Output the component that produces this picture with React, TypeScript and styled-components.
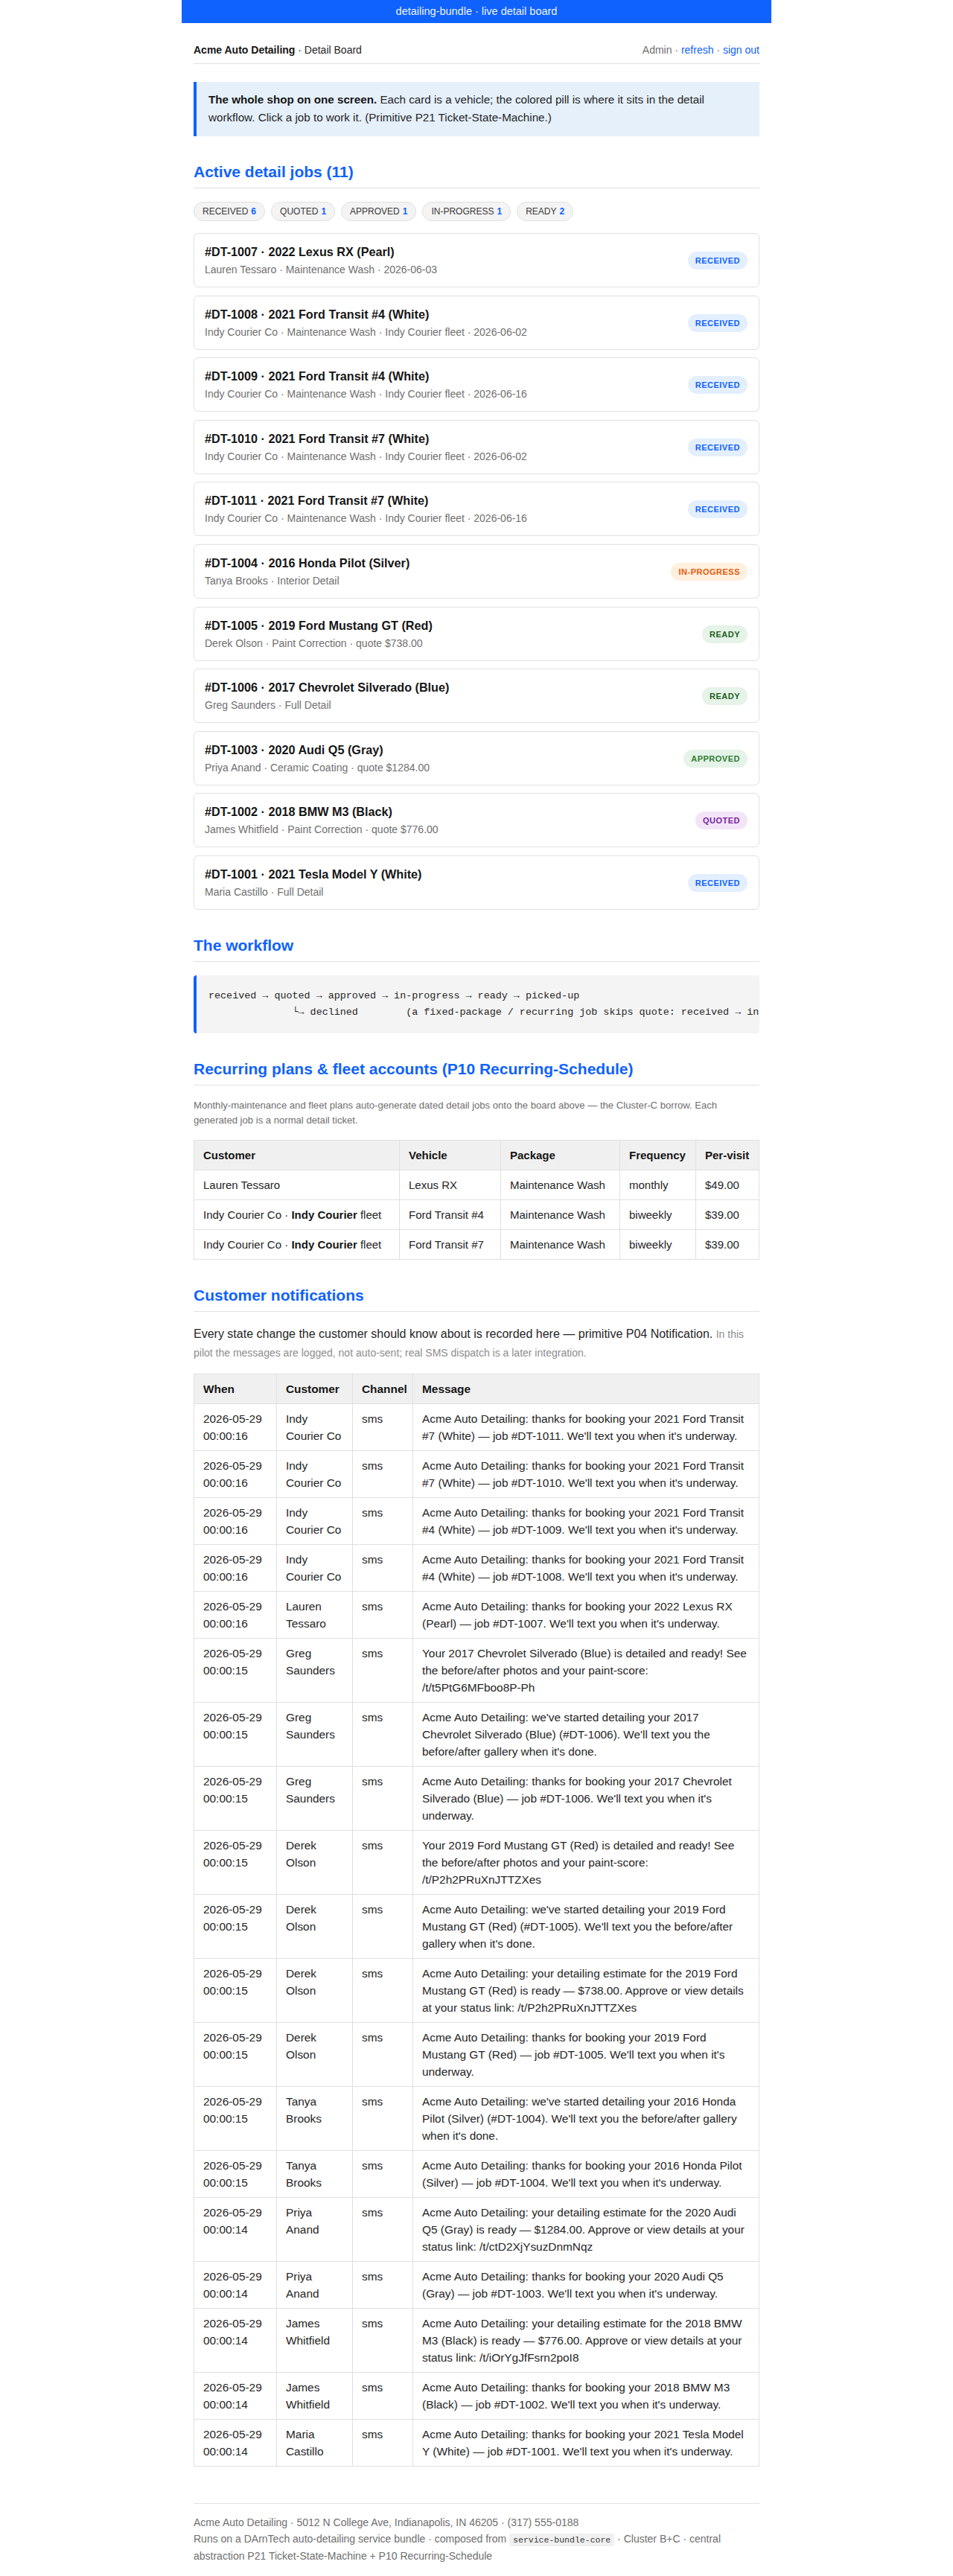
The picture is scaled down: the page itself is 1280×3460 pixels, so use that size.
import React from "react";
import styled, { createGlobalStyle, css } from "styled-components";

const GlobalStyle = createGlobalStyle`
  html, body {
    margin: 0;
    padding: 0;
    background: #ffffff;
  }
  body {
    font-family: "Liberation Sans", Arial, sans-serif;
    color: #161616;
  }
  *, *::before, *::after {
    box-sizing: border-box;
  }
`;

const BLUE = "#0f62fe";
const LINE = "#e0e0e0";
const MUTED = "#6f6f6f";

/* ---------- frame ---------- */

const Shell = styled.div`
  max-width: 792px;
  margin: 0 auto;
`;

const TopBar = styled.div`
  height: 31px;
  background: ${BLUE};
  color: rgba(255, 255, 255, 0.95);
  font-size: 14.5px;
  line-height: 31px;
  text-align: center;
`;

const Main = styled.main`
  padding: 12px 16px 0;
`;

const Header = styled.header`
  display: flex;
  align-items: center;
  justify-content: space-between;
  padding: 14px 0 8px;
  border-bottom: 1px solid ${LINE};
  font-size: 14px;
  line-height: 20px;
`;

const Brand = styled.div`
  color: #262626;
  strong {
    color: #161616;
    font-weight: 700;
  }
`;

const UserNav = styled.nav`
  color: ${MUTED};
`;

const NavLink = styled.a`
  color: ${BLUE};
  text-decoration: none;
  cursor: pointer;
`;

const Callout = styled.div`
  margin-top: 24px;
  padding: 12px 20px 13px 16px;
  background: #e5f0fb;
  border-left: 4px solid ${BLUE};
  font-size: 15.2px;
  line-height: 24px;
  color: #262626;
  strong {
    color: #161616;
  }
`;

const SectionTitle = styled.h2`
  margin: 34px 0 0;
  padding-bottom: 7px;
  border-bottom: 1px solid ${LINE};
  color: ${BLUE};
  font-size: 21px;
  line-height: 28px;
  font-weight: 700;
`;

/* ---------- state counters ---------- */

const CounterRow = styled.div`
  display: flex;
  gap: 8px;
  margin-top: 18px;
`;

const Counter = styled.span`
  display: inline-flex;
  align-items: center;
  gap: 4px;
  height: 26px;
  padding: 0 11px;
  border: 1px solid ${LINE};
  border-radius: 13px;
  background: #f4f4f4;
  color: #393939;
  font-size: 12px;
  b {
    color: ${BLUE};
    font-weight: 700;
  }
`;

/* ---------- job cards ---------- */

const JobList = styled.div`
  display: flex;
  flex-direction: column;
  gap: 10.6px;
  margin-top: 16px;
`;

const JobCard = styled.a`
  display: flex;
  align-items: center;
  justify-content: space-between;
  padding: 14px 15px 13px 14px;
  border: 1px solid ${LINE};
  border-radius: 6px;
  background: #ffffff;
  color: inherit;
  text-decoration: none;
  cursor: pointer;
`;

const JobText = styled.div`
  display: flex;
  flex-direction: column;
  gap: 4px;
`;

const JobTitle = styled.div`
  font-size: 16.2px;
  line-height: 20px;
  font-weight: 700;
  color: #161616;
`;

const JobMeta = styled.div`
  font-size: 14px;
  line-height: 20px;
  color: ${MUTED};
`;

type Status = "received" | "quoted" | "approved" | "in-progress" | "ready";

const statusColors: Record<Status, { bg: string; fg: string }> = {
  received: { bg: "#e3efff", fg: "#0f62fe" },
  quoted: { bg: "#f3e5f7", fg: "#7b1fa2" },
  approved: { bg: "#e5f3e8", fg: "#2e7d32" },
  "in-progress": { bg: "#fff0de", fg: "#e8590c" },
  ready: { bg: "#e5f3e8", fg: "#1b5e20" },
};

const Badge = styled.span<{ $status: Status }>`
  flex-shrink: 0;
  padding: 5px 10px;
  border-radius: 12px;
  font-size: 11px;
  line-height: 14px;
  font-weight: 700;
  letter-spacing: 0.5px;
  text-transform: uppercase;
  ${({ $status }) => css`
    background: ${statusColors[$status].bg};
    color: ${statusColors[$status].fg};
  `}
`;

/* ---------- workflow ---------- */

const Flow = styled.pre`
  margin: 18px 0 0;
  padding: 17px 16px;
  overflow: hidden;
  background: #f4f4f4;
  border-left: 4px solid ${BLUE};
  border-radius: 4px;
  font-family: "Liberation Mono", "DejaVu Sans Mono", monospace;
  font-size: 13.4px;
  line-height: 22px;
  color: #262626;
  white-space: pre;
`;

/* ---------- text + tables ---------- */

const Note = styled.p`
  margin: 17px 0 0;
  font-size: 13.1px;
  line-height: 20px;
  color: ${MUTED};
`;

const Lead = styled.p`
  margin: 18px 0 0;
  font-size: 16px;
  line-height: 24.6px;
  color: #262626;
`;

const Aside = styled.span`
  font-size: 14px;
  color: #8d8d8d;
`;

const Table = styled.table<{ $size: number }>`
  width: 100%;
  margin-top: 16px;
  border-collapse: collapse;
  table-layout: fixed;
  font-size: ${({ $size }) => $size}px;
  line-height: 23px;
  color: #262626;
`;

const Col = styled.col<{ $w?: number }>`
  ${({ $w }) => ($w ? `width: ${$w}px;` : "")}
`;

const Th = styled.th`
  padding: 8px 12px;
  border: 1px solid ${LINE};
  background: #f0f0f0;
  color: #161616;
  font-weight: 700;
  text-align: left;
`;

const Td = styled.td`
  padding: 8px 12px;
  border: 1px solid ${LINE};
  vertical-align: top;
  strong {
    color: #161616;
  }
`;

const StatusLink = styled.span`
  white-space: nowrap;
`;

/* ---------- footer ---------- */

const Footer = styled.footer`
  margin-top: 49px;
  padding: 15px 0 16px;
  border-top: 1px solid ${LINE};
  font-size: 14px;
  line-height: 21.7px;
  color: ${MUTED};
`;

const Code = styled.code`
  padding: 2px 5px;
  border-radius: 3px;
  background: #f0f0f0;
  color: #393939;
  font-family: "Liberation Mono", "DejaVu Sans Mono", monospace;
  font-size: 11.5px;
`;

/* ---------- data ---------- */

const counters: { label: string; n: number }[] = [
  { label: "RECEIVED", n: 6 },
  { label: "QUOTED", n: 1 },
  { label: "APPROVED", n: 1 },
  { label: "IN-PROGRESS", n: 1 },
  { label: "READY", n: 2 },
];

const FLEET = "Indy Courier Co · Maintenance Wash · Indy Courier fleet";

const jobs: { title: string; meta: string; status: Status }[] = [
  { title: "#DT-1007 · 2022 Lexus RX (Pearl)", meta: "Lauren Tessaro · Maintenance Wash · 2026-06-03", status: "received" },
  { title: "#DT-1008 · 2021 Ford Transit #4 (White)", meta: `${FLEET} · 2026-06-02`, status: "received" },
  { title: "#DT-1009 · 2021 Ford Transit #4 (White)", meta: `${FLEET} · 2026-06-16`, status: "received" },
  { title: "#DT-1010 · 2021 Ford Transit #7 (White)", meta: `${FLEET} · 2026-06-02`, status: "received" },
  { title: "#DT-1011 · 2021 Ford Transit #7 (White)", meta: `${FLEET} · 2026-06-16`, status: "received" },
  { title: "#DT-1004 · 2016 Honda Pilot (Silver)", meta: "Tanya Brooks · Interior Detail", status: "in-progress" },
  { title: "#DT-1005 · 2019 Ford Mustang GT (Red)", meta: "Derek Olson · Paint Correction · quote $738.00", status: "ready" },
  { title: "#DT-1006 · 2017 Chevrolet Silverado (Blue)", meta: "Greg Saunders · Full Detail", status: "ready" },
  { title: "#DT-1003 · 2020 Audi Q5 (Gray)", meta: "Priya Anand · Ceramic Coating · quote $1284.00", status: "approved" },
  { title: "#DT-1002 · 2018 BMW M3 (Black)", meta: "James Whitfield · Paint Correction · quote $776.00", status: "quoted" },
  { title: "#DT-1001 · 2021 Tesla Model Y (White)", meta: "Maria Castillo · Full Detail", status: "received" },
];

const flowText =
  "received → quoted → approved → in-progress → ready → picked-up\n" +
  "              └→ declined        (a fixed-package / recurring job skips quote: received → in-progress)";

const plans = [
  { customer: "Lauren Tessaro", fleet: false, vehicle: "Lexus RX", pkg: "Maintenance Wash", freq: "monthly", price: "$49.00" },
  { customer: "Indy Courier Co", fleet: true, vehicle: "Ford Transit #4", pkg: "Maintenance Wash", freq: "biweekly", price: "$39.00" },
  { customer: "Indy Courier Co", fleet: true, vehicle: "Ford Transit #7", pkg: "Maintenance Wash", freq: "biweekly", price: "$39.00" },
];

type Message = { text: string; link?: string };

const booked = (vehicle: string, job: string): Message => ({
  text: `Acme Auto Detailing: thanks for booking your ${vehicle} — job #${job}. We'll text you when it's underway.`,
});
const started = (vehicle: string, job: string): Message => ({
  text: `Acme Auto Detailing: we've started detailing your ${vehicle} (#${job}). We'll text you the before/after gallery when it's done.`,
});
const estimate = (vehicle: string, amount: string, link: string): Message => ({
  text: `Acme Auto Detailing: your detailing estimate for the ${vehicle} is ready — ${amount}. Approve or view details at your status link:`,
  link,
});
const done = (vehicle: string, link: string): Message => ({
  text: `Your ${vehicle} is detailed and ready! See the before/after photos and your paint-score:`,
  link,
});

const notes: { time: string; who: string; msg: Message }[] = [
  { time: "00:00:16", who: "Indy Courier Co", msg: booked("2021 Ford Transit #7 (White)", "DT-1011") },
  { time: "00:00:16", who: "Indy Courier Co", msg: booked("2021 Ford Transit #7 (White)", "DT-1010") },
  { time: "00:00:16", who: "Indy Courier Co", msg: booked("2021 Ford Transit #4 (White)", "DT-1009") },
  { time: "00:00:16", who: "Indy Courier Co", msg: booked("2021 Ford Transit #4 (White)", "DT-1008") },
  { time: "00:00:16", who: "Lauren Tessaro", msg: booked("2022 Lexus RX (Pearl)", "DT-1007") },
  { time: "00:00:15", who: "Greg Saunders", msg: done("2017 Chevrolet Silverado (Blue)", "/t/t5PtG6MFboo8P-Ph") },
  { time: "00:00:15", who: "Greg Saunders", msg: started("2017 Chevrolet Silverado (Blue)", "DT-1006") },
  { time: "00:00:15", who: "Greg Saunders", msg: booked("2017 Chevrolet Silverado (Blue)", "DT-1006") },
  { time: "00:00:15", who: "Derek Olson", msg: done("2019 Ford Mustang GT (Red)", "/t/P2h2PRuXnJTTZXes") },
  { time: "00:00:15", who: "Derek Olson", msg: started("2019 Ford Mustang GT (Red)", "DT-1005") },
  { time: "00:00:15", who: "Derek Olson", msg: estimate("2019 Ford Mustang GT (Red)", "$738.00", "/t/P2h2PRuXnJTTZXes") },
  { time: "00:00:15", who: "Derek Olson", msg: booked("2019 Ford Mustang GT (Red)", "DT-1005") },
  { time: "00:00:15", who: "Tanya Brooks", msg: started("2016 Honda Pilot (Silver)", "DT-1004") },
  { time: "00:00:15", who: "Tanya Brooks", msg: booked("2016 Honda Pilot (Silver)", "DT-1004") },
  { time: "00:00:14", who: "Priya Anand", msg: estimate("2020 Audi Q5 (Gray)", "$1284.00", "/t/ctD2XjYsuzDnmNqz") },
  { time: "00:00:14", who: "Priya Anand", msg: booked("2020 Audi Q5 (Gray)", "DT-1003") },
  { time: "00:00:14", who: "James Whitfield", msg: estimate("2018 BMW M3 (Black)", "$776.00", "/t/iOrYgJfFsrn2poI8") },
  { time: "00:00:14", who: "James Whitfield", msg: booked("2018 BMW M3 (Black)", "DT-1002") },
  { time: "00:00:14", who: "Maria Castillo", msg: booked("2021 Tesla Model Y (White)", "DT-1001") },
];

export default function App() {
  return (
    <>
      <GlobalStyle />
      <Shell>
        <TopBar>detailing-bundle · live detail board</TopBar>
        <Main>
          <Header>
            <Brand>
              <strong>Acme Auto Detailing</strong> · Detail Board
            </Brand>
            <UserNav>
              Admin · <NavLink>refresh</NavLink> · <NavLink>sign out</NavLink>
            </UserNav>
          </Header>

          <Callout>
            <strong>The whole shop on one screen.</strong> Each card is a vehicle; the colored pill is
            where it sits in the detail workflow. Click a job to work it. (Primitive P21
            Ticket-State-Machine.)
          </Callout>

          <SectionTitle>Active detail jobs (11)</SectionTitle>
          <CounterRow>
            {counters.map((c) => (
              <Counter key={c.label}>
                {c.label} <b>{c.n}</b>
              </Counter>
            ))}
          </CounterRow>
          <JobList>
            {jobs.map((j) => (
              <JobCard key={j.title}>
                <JobText>
                  <JobTitle>{j.title}</JobTitle>
                  <JobMeta>{j.meta}</JobMeta>
                </JobText>
                <Badge $status={j.status}>{j.status}</Badge>
              </JobCard>
            ))}
          </JobList>

          <SectionTitle>The workflow</SectionTitle>
          <Flow>{flowText}</Flow>

          <SectionTitle>Recurring plans &amp; fleet accounts (P10 Recurring-Schedule)</SectionTitle>
          <Note>
            Monthly-maintenance and fleet plans auto-generate dated detail jobs onto the board above — the
            Cluster-C borrow. Each generated job is a normal detail ticket.
          </Note>
          <Table $size={15}>
            <colgroup>
              <Col $w={276} />
              <Col $w={136} />
              <Col $w={160} />
              <Col $w={102} />
              <Col />
            </colgroup>
            <thead>
              <tr>
                <Th>Customer</Th>
                <Th>Vehicle</Th>
                <Th>Package</Th>
                <Th>Frequency</Th>
                <Th>Per-visit</Th>
              </tr>
            </thead>
            <tbody>
              {plans.map((p) => (
                <tr key={p.vehicle}>
                  <Td>
                    {p.customer}
                    {p.fleet && (
                      <>
                        {" · "}
                        <strong>Indy Courier</strong> fleet
                      </>
                    )}
                  </Td>
                  <Td>{p.vehicle}</Td>
                  <Td>{p.pkg}</Td>
                  <Td>{p.freq}</Td>
                  <Td>{p.price}</Td>
                </tr>
              ))}
            </tbody>
          </Table>

          <SectionTitle>Customer notifications</SectionTitle>
          <Lead>
            Every state change the customer should know about is recorded here — primitive P04
            Notification.{" "}
            <Aside>
              In this pilot the messages are logged, not auto-sent; real SMS dispatch is a later
              integration.
            </Aside>
          </Lead>
          <Table $size={15.4}>
            <colgroup>
              <Col $w={111} />
              <Col $w={102} />
              <Col $w={81} />
              <Col />
            </colgroup>
            <thead>
              <tr>
                <Th>When</Th>
                <Th>Customer</Th>
                <Th>Channel</Th>
                <Th>Message</Th>
              </tr>
            </thead>
            <tbody>
              {notes.map((n, i) => (
                <tr key={i}>
                  <Td>2026-05-29 {n.time}</Td>
                  <Td>{n.who}</Td>
                  <Td>sms</Td>
                  <Td>
                    {n.msg.text}
                    {n.msg.link && (
                      <>
                        {" "}
                        <StatusLink>{n.msg.link}</StatusLink>
                      </>
                    )}
                  </Td>
                </tr>
              ))}
            </tbody>
          </Table>

          <Footer>
            Acme Auto Detailing · 5012 N College Ave, Indianapolis, IN 46205 · (317) 555-0188
            <br />
            Runs on a DArnTech auto-detailing service bundle · composed from{" "}
            <Code>service-bundle-core</Code> · Cluster B+C · central abstraction P21
            Ticket-State-Machine + P10 Recurring-Schedule
          </Footer>
        </Main>
      </Shell>
    </>
  );
}
